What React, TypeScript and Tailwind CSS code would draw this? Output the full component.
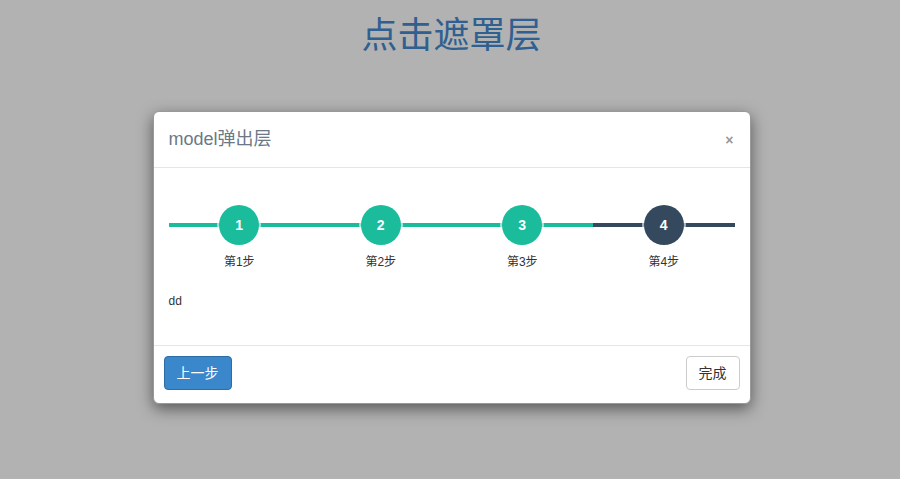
const steps = [
  { n: 1, label: "第1步", done: true },
  { n: 2, label: "第2步", done: true },
  { n: 3, label: "第3步", done: true },
  { n: 4, label: "第4步", done: false },
];

export default function App() {
  return (
    <div
      className="flex h-[479px] w-[900px] flex-col items-center overflow-hidden bg-[#b2b2b2] pl-[3px]"
      style={{ fontFamily: '"Liberation Sans", Arial, "Noto Sans CJK SC", sans-serif' }}
    >
      <h1 className="mt-[12px] text-[36px] leading-[48px] text-[#2f6090]">点击遮罩层</h1>

      <div className="mt-[51px] w-[598px] rounded-[6px] border border-[#999] bg-white shadow-[0_5px_15px_rgba(0,0,0,0.5)]">
        <div className="flex h-[56px] items-center justify-between border-b border-[#e5e5e5] px-[15px]">
          <h4 className="text-[18px] text-[#6b7888]">model弹出层</h4>
          <span className="mr-[1px] text-[14px] font-bold leading-none text-[#9a9a9a]">×</span>
        </div>

        <div className="px-[15px] pb-[32px] pt-[37px]">
          <div className="flex">
            {steps.map((s) => (
              <div key={s.n} className="flex flex-1 flex-col items-center">
                <div className="relative flex h-[40px] w-full items-center justify-center">
                  <div
                    className={`absolute left-0 right-0 top-[18px] h-[4px] ${s.done ? "bg-[#1abc9c]" : "bg-[#34495e]"}`}
                  />
                  <div
                    className={`relative flex h-[40px] w-[40px] items-center justify-center rounded-full text-[14px] font-bold text-white ring-2 ring-white/60 ${s.done ? "bg-[#1abc9c]" : "bg-[#34495e]"}`}
                  >
                    {s.n}
                  </div>
                </div>
                <p className="mt-[10px] text-[12px] leading-[14px] text-[#333]">{s.label}</p>
              </div>
            ))}
          </div>
          <p className="mt-[20px] text-[12px] leading-[24px] text-[#333]">dd</p>
        </div>

        <div className="flex items-center justify-between border-t border-[#e5e5e5] px-[10px] pb-[13px] pt-[10px]">
          <button className="h-[34px] rounded-[4px] border border-[#2e6da4] bg-[#3a87cb] px-[12px] text-[14px] text-white">
            上一步
          </button>
          <button className="h-[34px] rounded-[4px] border border-[#ccc] bg-white px-[12px] text-[14px] text-[#333]">
            完成
          </button>
        </div>
      </div>
    </div>
  );
}
